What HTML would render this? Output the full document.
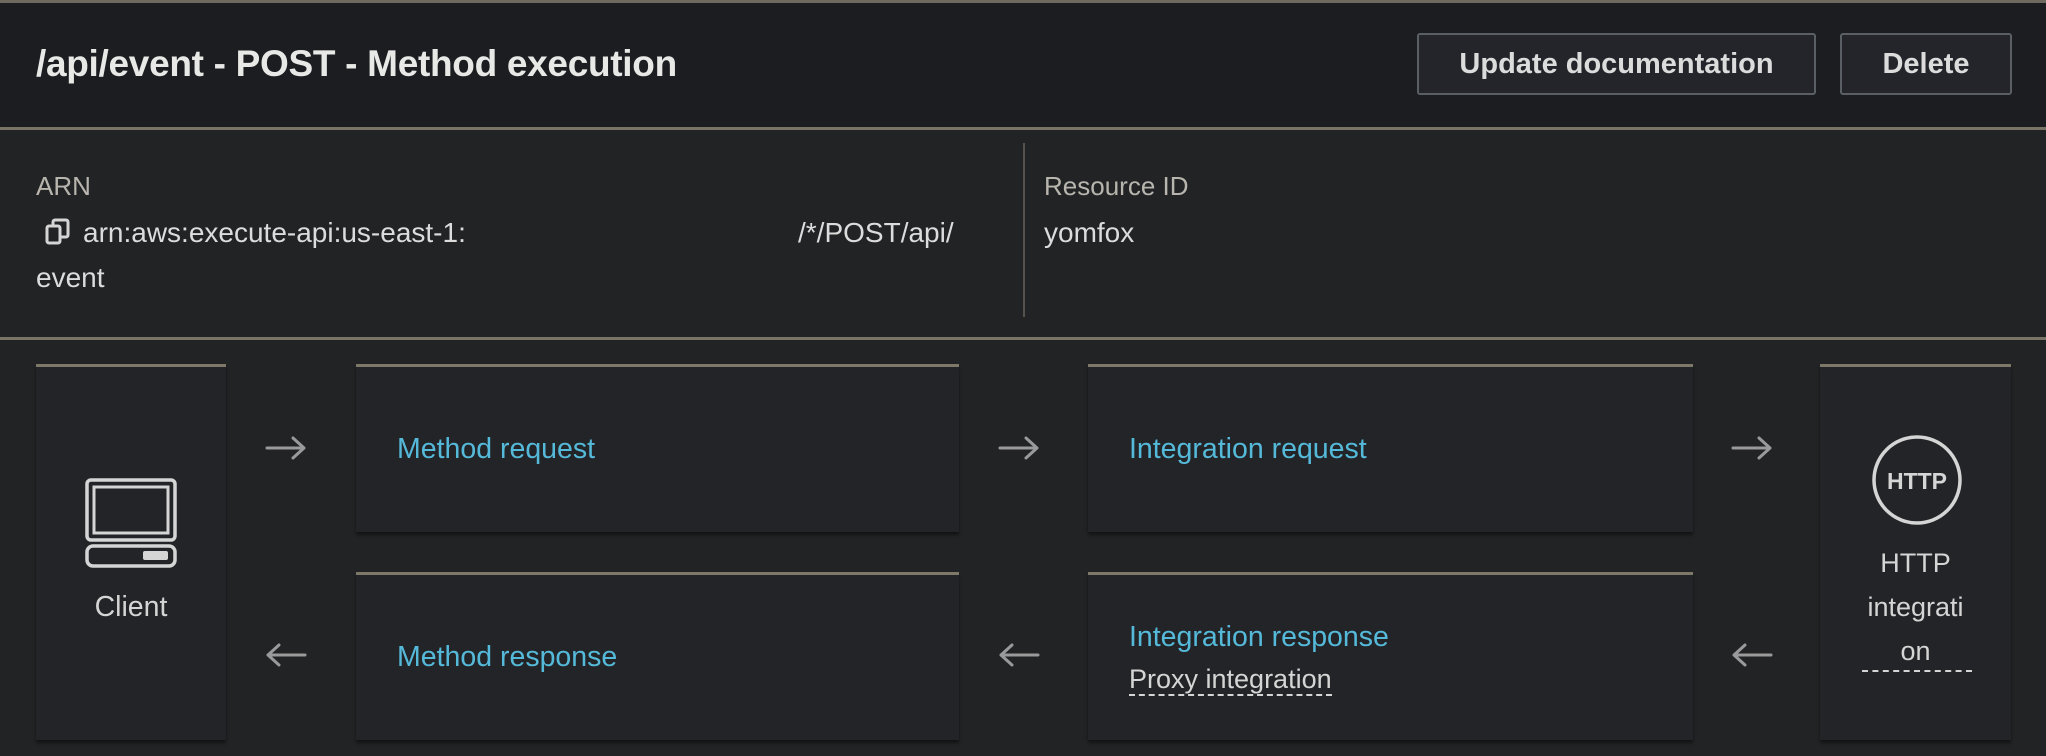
<!DOCTYPE html>
<html><head><meta charset="utf-8"><style>
*{margin:0;padding:0;box-sizing:border-box}
body{width:2046px;height:756px;background:#222325;font-family:"Liberation Sans",sans-serif;position:relative;overflow:hidden;color:#d5d5d5}
.hdr{position:absolute;left:0;top:0;width:2046px;height:128px;background:#1b1d21;border-top:3px solid #6f6a60}
.title{position:absolute;left:36px;top:40px;font-size:37px;font-weight:bold;color:#e8e8e6;letter-spacing:-0.3px}
.btn{position:absolute;top:30px;height:62px;border:2px solid #5a5f66;border-radius:3px;background:#23252a;color:#dcdcdc;font-weight:bold;font-size:29px;display:flex;align-items:center;justify-content:center}
.line{position:absolute;left:0;width:2046px;height:3px;background:#7a7466}
.lbl{position:absolute;font-size:26px;color:#b8b5ae}
.val{position:absolute;font-size:28px;color:#dcdcdc}
.box{position:absolute;background:#232427;border-top:3px solid #7d7868;box-shadow:0 3px 3px rgba(0,0,0,.45)}
.link{position:absolute;font-size:28.5px;color:#55b9d9}
.arr{position:absolute;width:42px;height:24px}
</style></head><body>
<div class="hdr">
<div class="title">/api/event - POST - Method execution</div>
<div class="btn" style="left:1417px;width:399px">Update documentation</div>
<div class="btn" style="left:1840px;width:172px">Delete</div>
</div>
<div class="line" style="top:127px"></div>
<div class="lbl" style="left:36px;top:171px">ARN</div>
<svg style="position:absolute;left:45px;top:218px" width="26" height="28" viewBox="0 0 26 28"><rect x="8" y="2" width="15" height="17" rx="2" fill="none" stroke="#d5d5d5" stroke-width="3"/><rect x="2" y="8" width="13" height="17" rx="2" fill="#222325" stroke="#d5d5d5" stroke-width="3"/></svg>
<div class="val" style="left:83px;top:217px">arn:aws:execute-api:us-east-1:</div>
<div class="val" style="left:798px;top:217px">/*/POST/api/</div>
<div class="val" style="left:36px;top:262px">event</div>
<div style="position:absolute;left:1023px;top:143px;width:2px;height:174px;background:#55524c"></div>
<div class="lbl" style="left:1044px;top:171px">Resource ID</div>
<div class="val" style="left:1044px;top:217px">yomfox</div>
<div class="line" style="top:337px"></div>

<div class="box" style="left:36px;top:364px;width:190px;height:376px"></div>
<svg style="position:absolute;left:85px;top:478px" width="92" height="90" viewBox="0 0 92 90"><rect x="2" y="2" width="88" height="60" rx="4" fill="none" stroke="#d5d5d5" stroke-width="3.5"/><rect x="9" y="9" width="74" height="46" fill="none" stroke="#d5d5d5" stroke-width="3"/><rect x="2" y="68" width="88" height="20" rx="6" fill="none" stroke="#d5d5d5" stroke-width="3.5"/><rect x="58" y="73" width="25" height="9" rx="2" fill="#d5d5d5"/></svg>
<div style="position:absolute;left:36px;width:190px;top:591px;text-align:center;font-size:28.5px;color:#d5d5d5">Client</div>

<div class="box" style="left:356px;top:364px;width:603px;height:168px"></div>
<div class="link" style="left:397px;top:433px">Method request</div>
<div class="box" style="left:356px;top:572px;width:603px;height:168px"></div>
<div class="link" style="left:397px;top:641px">Method response</div>

<div class="box" style="left:1088px;top:364px;width:605px;height:168px"></div>
<div class="link" style="left:1129px;top:433px">Integration request</div>
<div class="box" style="left:1088px;top:572px;width:605px;height:168px"></div>
<div class="link" style="left:1129px;top:621px">Integration response</div>
<div style="position:absolute;left:1129px;top:664px;font-size:27px;color:#d5d5d5;border-bottom:2px dashed #d5d5d5;line-height:30px">Proxy integration</div>

<div class="box" style="left:1820px;top:364px;width:191px;height:376px"></div>
<svg style="position:absolute;left:1870px;top:433px" width="94" height="94" viewBox="0 0 94 94"><circle cx="47" cy="47" r="43" fill="none" stroke="#d5d5d5" stroke-width="3.5"/><text x="47" y="56" text-anchor="middle" font-family="Liberation Sans" font-weight="bold" font-size="23" fill="#d5d5d5">HTTP</text></svg>
<div style="position:absolute;left:1820px;width:191px;top:541px;text-align:center;font-size:27px;color:#d5d5d5;line-height:44px">HTTP<br>integrati<br>on</div>
<div style="position:absolute;left:1862px;top:670px;width:110px;border-top:2px dashed #d5d5d5"></div>

<svg class="arr" style="left:265px;top:436px" viewBox="0 0 42 24"><path d="M2 12H39M28 2L39 12L28 22" fill="none" stroke="#9a9a9a" stroke-width="3" stroke-linecap="round" stroke-linejoin="round"/></svg>
<svg class="arr" style="left:998px;top:436px" viewBox="0 0 42 24"><path d="M2 12H39M28 2L39 12L28 22" fill="none" stroke="#9a9a9a" stroke-width="3" stroke-linecap="round" stroke-linejoin="round"/></svg>
<svg class="arr" style="left:1731px;top:436px" viewBox="0 0 42 24"><path d="M2 12H39M28 2L39 12L28 22" fill="none" stroke="#9a9a9a" stroke-width="3" stroke-linecap="round" stroke-linejoin="round"/></svg>
<svg class="arr" style="left:265px;top:643px" viewBox="0 0 42 24"><path d="M40 12H3M14 2L3 12L14 22" fill="none" stroke="#9a9a9a" stroke-width="3" stroke-linecap="round" stroke-linejoin="round"/></svg>
<svg class="arr" style="left:998px;top:643px" viewBox="0 0 42 24"><path d="M40 12H3M14 2L3 12L14 22" fill="none" stroke="#9a9a9a" stroke-width="3" stroke-linecap="round" stroke-linejoin="round"/></svg>
<svg class="arr" style="left:1731px;top:643px" viewBox="0 0 42 24"><path d="M40 12H3M14 2L3 12L14 22" fill="none" stroke="#9a9a9a" stroke-width="3" stroke-linecap="round" stroke-linejoin="round"/></svg>
</body></html>
